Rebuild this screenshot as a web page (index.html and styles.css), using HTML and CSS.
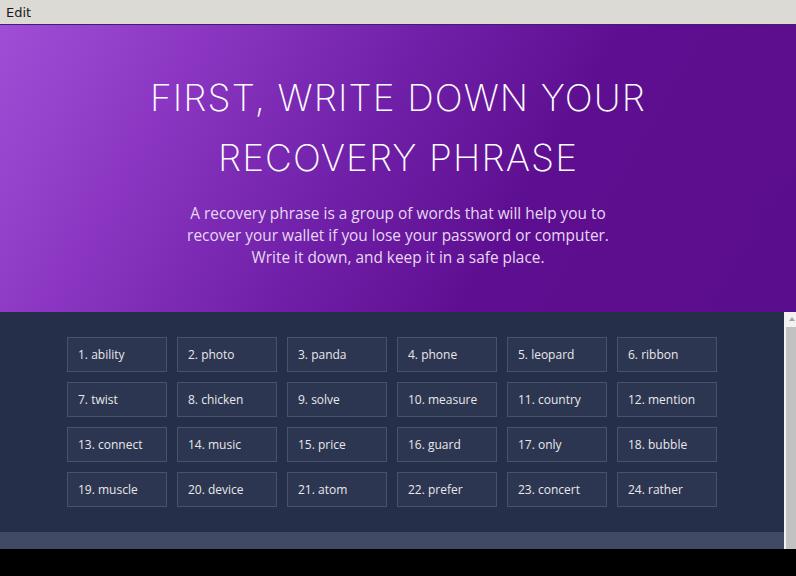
FILE: index.html
```html
<!DOCTYPE html>
<html>
<head>
<meta charset="utf-8">
<link rel="stylesheet" href="styles.css">
</head>
<body>
<div class="app">
  <div class="menubar"><span class="menu-item">Edit</span></div>
  <header class="hero">
    <h1 class="title">FIRST, WRITE DOWN YOUR<br>RECOVERY PHRASE</h1>
    <p class="subtitle">A recovery phrase is a group of words that will help you to<br>recover your wallet if you lose your password or computer.<br>Write it down, and keep it in a safe place.</p>
  </header>
  <div class="scroller">
    <div class="content">
      <div class="words">
        <div class="word">1. ability</div>
        <div class="word">2. photo</div>
        <div class="word">3. panda</div>
        <div class="word">4. phone</div>
        <div class="word">5. leopard</div>
        <div class="word">6. ribbon</div>
        <div class="word">7. twist</div>
        <div class="word">8. chicken</div>
        <div class="word">9. solve</div>
        <div class="word">10. measure</div>
        <div class="word">11. country</div>
        <div class="word">12. mention</div>
        <div class="word">13. connect</div>
        <div class="word">14. music</div>
        <div class="word">15. price</div>
        <div class="word">16. guard</div>
        <div class="word">17. only</div>
        <div class="word">18. bubble</div>
        <div class="word">19. muscle</div>
        <div class="word">20. device</div>
        <div class="word">21. atom</div>
        <div class="word">22. prefer</div>
        <div class="word">23. concert</div>
        <div class="word">24. rather</div>
      </div>
      <div class="footer-strip"></div>
    </div>
    <div class="scrollbar">
      <div class="sb-arrow"></div>
      <div class="sb-thumb"></div>
    </div>
  </div>
</div>
</body>
</html>
```
FILE: styles.css
```css
* { box-sizing: border-box; }
html, body { margin: 0; padding: 0; }
body {
  background: #000;
  width: 796px;
  height: 576px;
  overflow: hidden;
}
.app {
  height: 549px;
  display: flex;
  flex-direction: column;
}
.menubar {
  height: 25px;
  background: #dcdad5;
  border-bottom: 1px solid #4a1a6e;
  display: flex;
  align-items: center;
  padding-left: 6px;
}
.menu-item {
  font-family: "DejaVu Sans", sans-serif;
  font-size: 13px;
  color: #1a1a1a;
  line-height: 16px;
  padding-top: 1px;
}
.hero {
  height: 287px;
  background: linear-gradient(120deg, #a04ed6 0%, #8a36c2 22%, #7020a8 45%, #5e0f91 65%, #5a0d8c 100%);
  text-align: center;
  padding-top: 43px;
}
.title {
  margin: 0;
  font-family: "Inter", "Liberation Sans", sans-serif;
  font-weight: 200;
  font-size: 37px;
  line-height: 60px;
  color: #ffffff;
  letter-spacing: 1.1px;
}
.subtitle {
  margin: 15px 0 0;
  font-family: "Open Sans", sans-serif;
  font-size: 15.4px;
  line-height: 22px;
  color: #e6d8f2;
}
.scroller {
  flex: 1;
  display: flex;
  min-height: 0;
}
.content {
  flex: 1;
  display: flex;
  flex-direction: column;
  background: #252f4a;
}
.words {
  flex: 1;
  display: grid;
  grid-template-columns: repeat(6, 100px);
  grid-auto-rows: 35px;
  gap: 10px;
  justify-content: center;
  align-content: start;
  padding-top: 25px;
}
.word {
  background: #2d3650;
  border: 1px solid #4a5269;
  font-family: "Open Sans", sans-serif;
  font-size: 12px;
  color: #e8e8ec;
  display: flex;
  align-items: center;
  padding-left: 10px;
  padding-bottom: 1px;
  white-space: nowrap;
}
.footer-strip {
  height: 17px;
  background: #414a63;
}
.scrollbar {
  width: 12px;
  background: #f2f2f2;
  display: flex;
  flex-direction: column;
  padding-left: 2px;
}
.sb-arrow {
  height: 15px;
  position: relative;
}
.sb-arrow::after {
  content: "";
  position: absolute;
  left: 3px;
  top: 5px;
  border-left: 3px solid transparent;
  border-right: 3px solid transparent;
  border-bottom: 4px solid #a3a3a3;
}
.sb-thumb {
  flex: 1;
  background: #c2c2c2;
}
```
